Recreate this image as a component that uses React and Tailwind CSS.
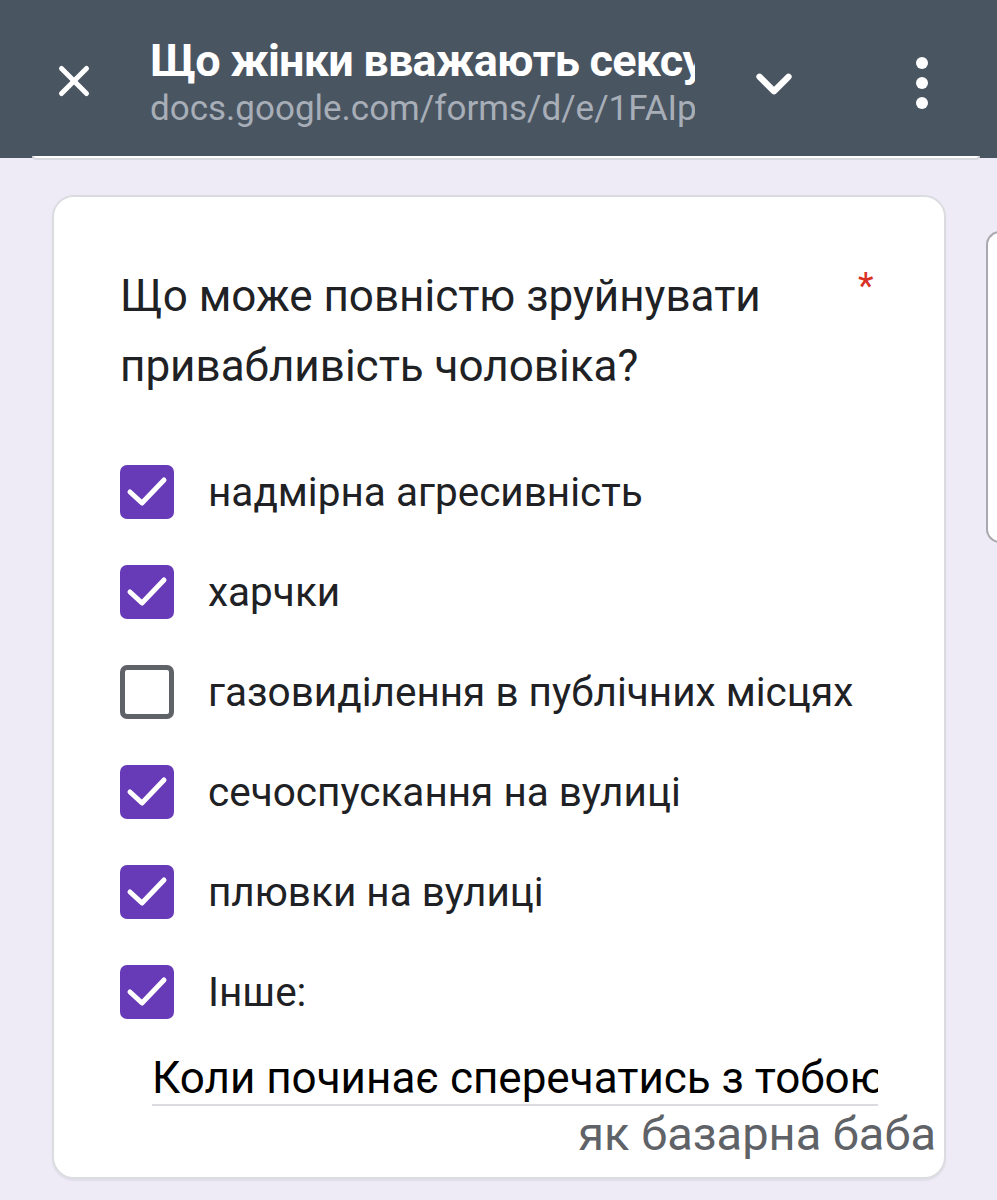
import { X, ChevronDown } from 'lucide-react';

const options = [
  { label: 'надмірна агресивність', checked: true },
  { label: 'харчки', checked: true },
  { label: 'газовиділення в публічних місцях', checked: false },
  { label: 'сечоспускання на вулиці', checked: true },
  { label: 'плювки на вулиці', checked: true },
  { label: 'Інше:', checked: true },
];

function Box({ checked }) {
  if (!checked) {
    return <div className="w-[54px] h-[54px] rounded-[7px] border-[5px] border-[#5f6368] bg-white shrink-0" />;
  }
  return (
    <div className="w-[54px] h-[54px] rounded-[7px] bg-[#673ab7] shrink-0">
      <svg width="54" height="54" viewBox="0 0 54 54" fill="none" stroke="white" strokeWidth="5" strokeLinecap="round" strokeLinejoin="round">
        <path d="M10 27l12 11 22-23" />
      </svg>
    </div>
  );
}

export default function App() {
  return (
    <div className="w-[997px] h-[1200px] overflow-hidden bg-[#eeebf6] font-['Roboto',sans-serif] relative">
      {/* Top bar */}
      <header className="h-[158px] bg-[#4a5562] flex items-center">
        <div className="w-[150px] flex justify-center shrink-0 mt-[3px]">
          <X className="text-white -ml-[3px]" size={50} strokeWidth={2.4} />
        </div>
        <div className="w-[545px] overflow-hidden shrink-0 mt-[10px]">
          <div className="text-white font-bold text-[45px] leading-[50px] whitespace-nowrap tracking-[-0.8px]">Що жінки вважають сексуальним у чоловіках</div>
          <div className="text-[#a7aeb7] text-[35px] leading-[46px] whitespace-nowrap">docs.google.com/forms/d/e/1FAIpQLSf</div>
        </div>
        <div className="ml-[50px] flex items-center mt-[10px]">
          <ChevronDown className="text-white" size={58} strokeWidth={2.6} />
        </div>
        <div className="ml-[113px] flex flex-col gap-[8px] items-center mt-[7px]">
          <span className="w-[12px] h-[12px] rounded-full bg-white" />
          <span className="w-[12px] h-[12px] rounded-full bg-white" />
          <span className="w-[12px] h-[12px] rounded-full bg-white" />
        </div>
      </header>

      {/* previous card bottom edge */}
      <div className="ml-[32px] w-[948px] h-[4px] -mt-[2px] rounded-b-[20px] border-b-2 border-x-2 border-[#d9d8de] bg-white" />

      <div className="flex mt-[35px]">
        {/* Question card */}
        <div className="ml-[52px] w-[894px] h-[984px] shrink-0 bg-white rounded-[22px] border-2 border-[#dadce0] shadow-[0_2px_2px_rgba(0,0,0,0.06)] pl-[66px] pr-[10px] pt-[64px]">
          <div className="flex">
            <div className="text-[#202124] text-[44px] leading-[70px] w-[700px]">
              Що може повністю зруйнувати привабливість чоловіка?
            </div>
            <span className="text-[#d93025] text-[36px] leading-[50px] ml-[38px]">*</span>
          </div>

          <div className="mt-[64px] flex flex-col gap-[46px]">
            {options.map((o) => (
              <div key={o.label} className="flex items-center h-[54px]">
                <Box checked={o.checked} />
                <span className="ml-[34px] text-[#202124] text-[40.5px] whitespace-nowrap">{o.label}</span>
              </div>
            ))}
          </div>

          <div className="ml-[32px] mt-[31px] w-[726px]">
            <div className="overflow-hidden whitespace-nowrap text-black text-[44px] leading-[56px]">
              Коли починає сперечатись з тобою і кричить
            </div>
            <div className="h-[2px] bg-[#dadce0] mt-[-2px]" />
          </div>
          <div className="text-right mr-[-2px] text-[#5f6368] text-[47px] leading-[60px] whitespace-nowrap -mt-[2px]">
            як базарна баба
          </div>
        </div>

        {/* next card edge */}
        <div className="ml-[40px] mt-[36px] w-[20px] h-[312px] shrink-0 rounded-l-[14px] border-2 border-r-0 border-[#a9a8ae] bg-white" />
      </div>
    </div>
  );
}
